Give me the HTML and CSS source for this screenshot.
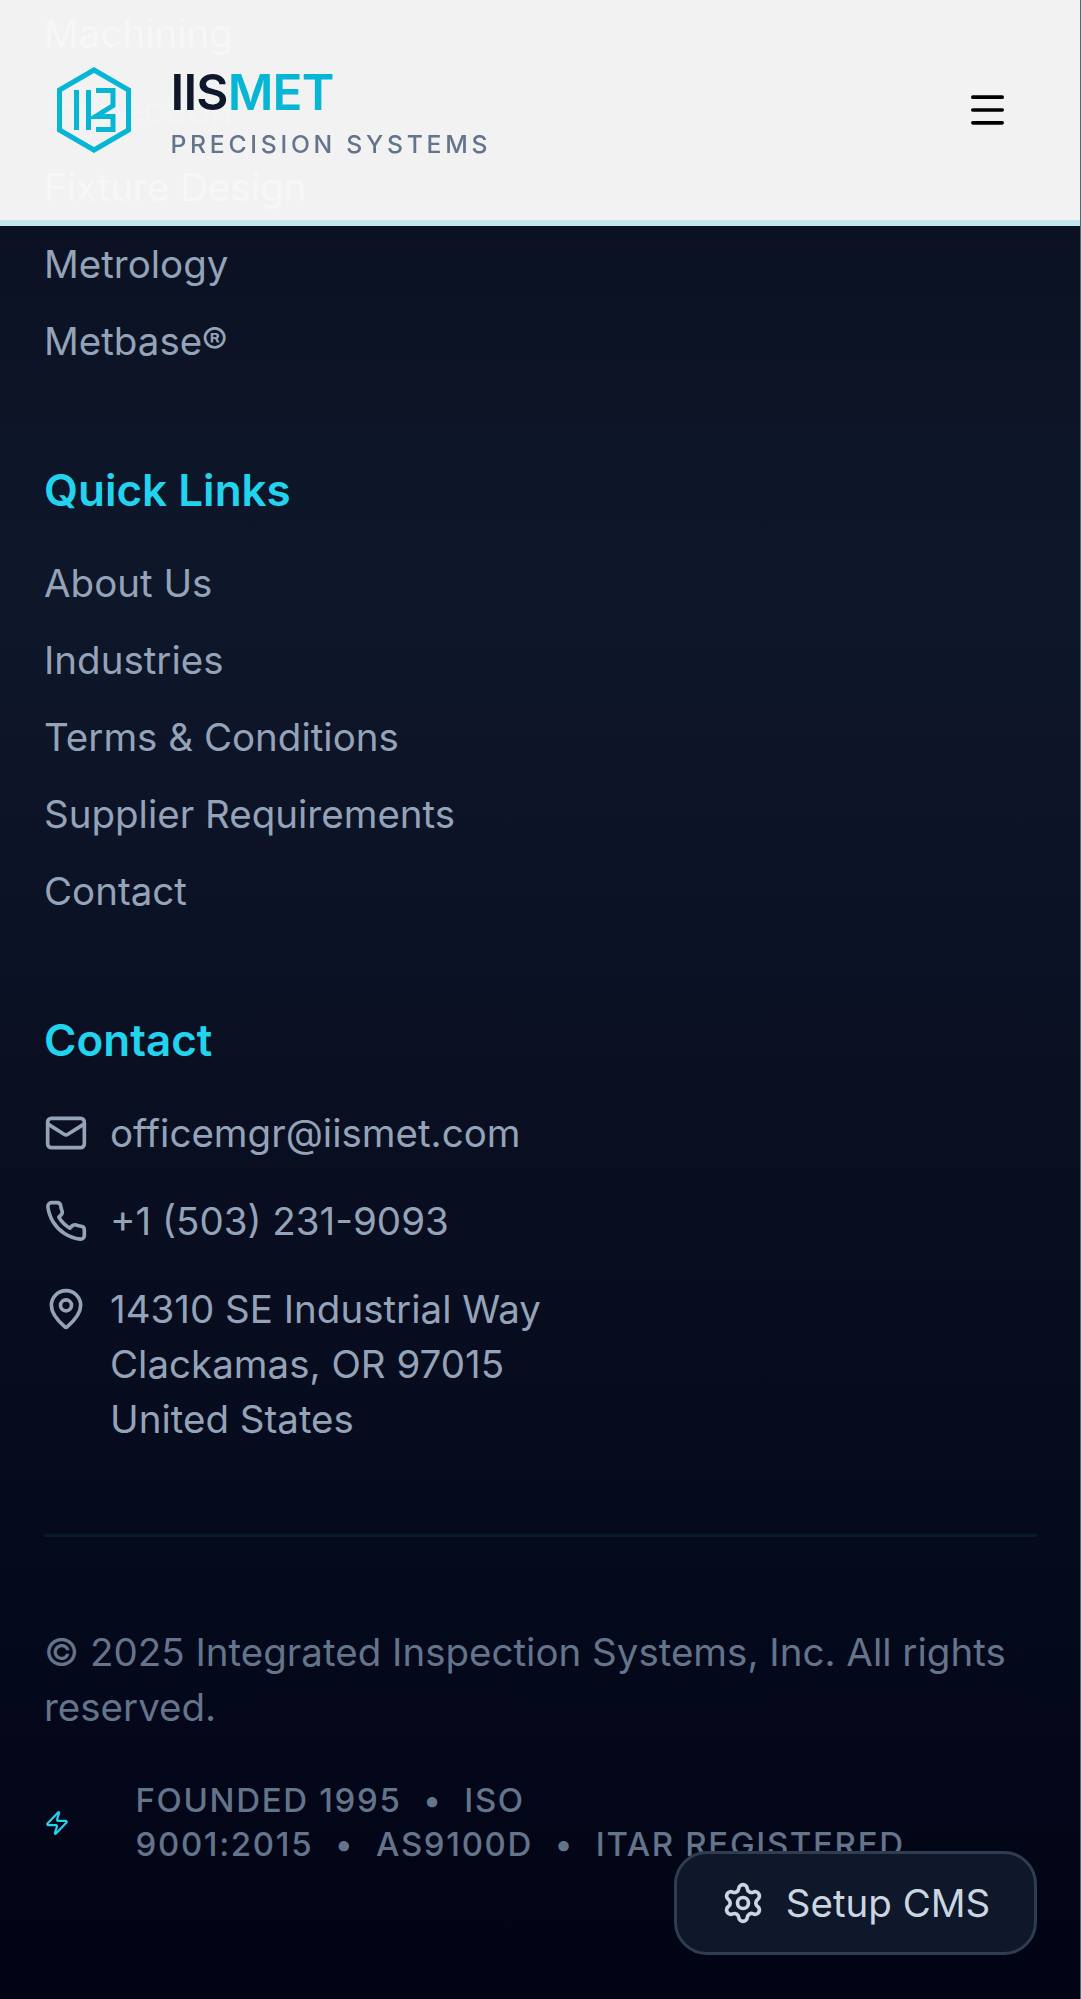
FILE: index.html
```html
<!DOCTYPE html>
<html lang="en">
<head>
<meta charset="utf-8">
<title>IISMET Precision Systems</title>
<link rel="stylesheet" href="styles.css">
</head>
<body>
<header class="header">
  <div class="brand">
    <svg class="brand-mark" viewBox="0 0 76 86" fill="none" stroke="currentColor" stroke-width="5">
      <path d="M38 3 L72.500 23 V63 L38 83 L3.500 63 V23 Z"/>
      <path d="M20.500 23 V63 M32.500 23 V63"/>
      <path d="M40 23.500 H57 V38.500 L39.500 49.500 H57 V62.500 H40"/>
    </svg>
    <div class="brand-text">
      <div class="brand-name">IIS<span class="brand-accent">MET</span></div>
      <div class="brand-tag">PRECISION SYSTEMS</div>
    </div>
  </div>
  <button class="menu-button" aria-label="Menu">
    <svg class="menu-icon" viewBox="0 0 24 24" fill="none" stroke="currentColor" stroke-width="2" stroke-linecap="round"><path d="M4 5h16M4 12h16M4 19h16"/></svg>
  </button>
</header>
<footer class="footer">
  <ul class="links">
    <li class="dim">Machining</li>
    <li class="dimmer">Inspection</li>
    <li class="dim">Fixture Design</li>
    <li>Metrology</li>
    <li>Metbase®</li>
  </ul>
  <section class="group">
    <h3 class="heading">Quick Links</h3>
    <ul class="links">
      <li>About Us</li>
      <li>Industries</li>
      <li>Terms &amp; Conditions</li>
      <li>Supplier Requirements</li>
      <li>Contact</li>
    </ul>
  </section>
  <section class="group">
    <h3 class="heading">Contact</h3>
    <ul class="contacts">
      <li class="contact">
        <svg class="icon" viewBox="0 0 24 24"><rect x="2" y="4" width="20" height="16" rx="2"/><path d="m22 7-8.970 5.700a1.940 1.940 0 0 1-2.060 0L2 7"/></svg>
        <span>officemgr@iismet.com</span>
      </li>
      <li class="contact">
        <svg class="icon" viewBox="0 0 24 24"><path d="M22 16.920v3a2 2 0 0 1-2.180 2 19.790 19.790 0 0 1-8.630-3.070 19.500 19.500 0 0 1-6-6 19.790 19.790 0 0 1-3.070-8.670A2 2 0 0 1 4.110 2h3a2 2 0 0 1 2 1.720 12.840 12.840 0 0 0 .7 2.810 2 2 0 0 1-.45 2.110L8.090 9.910a16 16 0 0 0 6 6l1.270-1.270a2 2 0 0 1 2.110-.45 12.840 12.840 0 0 0 2.810.7A2 2 0 0 1 22 16.920z"/></svg>
        <span>+1 (503) 231-9093</span>
      </li>
      <li class="contact">
        <svg class="icon" viewBox="0 0 24 24"><path d="M20 10c0 4.993-5.539 10.193-7.399 11.799a1 1 0 0 1-1.202 0C9.539 20.193 4 14.993 4 10a8 8 0 0 1 16 0"/><circle cx="12" cy="10" r="3"/></svg>
        <span>14310 SE Industrial Way<br>Clackamas, OR 97015<br>United States</span>
      </li>
    </ul>
  </section>
  <div class="bottom">
    <p class="copyright">© 2025 Integrated Inspection Systems, Inc. All rights reserved.</p>
    <div class="certs">
      <svg class="zap" viewBox="0 0 24 24"><path d="M4 14a1 1 0 0 1-.78-1.630l9.900-10.200a.5.5 0 0 1 .86.460l-1.920 6.020A1 1 0 0 0 13 10h7a1 1 0 0 1 .78 1.630l-9.900 10.200a.5.5 0 0 1-.86-.460l1.920-6.020A1 1 0 0 0 11 14z"/></svg>
      <span>FOUNDED 1995 &nbsp;<span class="dot">•</span>&nbsp; ISO<br>9001:2015 &nbsp;<span class="dot">•</span>&nbsp; AS9100D &nbsp;<span class="dot">•</span>&nbsp; ITAR REGISTERED</span>
    </div>
  </div>
</footer>
<button class="cms">
  <svg class="icon cms-icon" viewBox="0 0 24 24"><path d="M9.671 4.136a2.340 2.340 0 0 1 4.659 0 2.340 2.340 0 0 0 3.319 1.915 2.340 2.340 0 0 1 2.330 4.033 2.340 2.340 0 0 0 0 3.831 2.340 2.340 0 0 1-2.330 4.033 2.340 2.340 0 0 0-3.319 1.915 2.340 2.340 0 0 1-4.659 0 2.340 2.340 0 0 0-3.320-1.915 2.340 2.340 0 0 1-2.330-4.033 2.340 2.340 0 0 0 0-3.831A2.340 2.340 0 0 1 6.350 6.051a2.340 2.340 0 0 0 3.319-1.915"/><circle cx="12" cy="12" r="3"/></svg>
  <span>Setup CMS</span>
</button>
</body>
</html>
```
FILE: styles.css
```css
* { box-sizing: border-box; margin: 0; padding: 0; }
html { background: #5f636e; }
body {
  width: 1080px;
  height: 1999px;
  overflow: hidden;
  font: 38.5px/55px Inter, "Liberation Sans", sans-serif;
  color: #94a3b8;
}
ul { list-style: none; }
button { font: inherit; border: 0; background: none; }

.header {
  position: fixed;
  top: 0;
  left: 0;
  z-index: 2;
  width: 1080px;
  height: 226px;
  padding: 0 65px 0 56px;
  display: flex;
  align-items: center;
  justify-content: space-between;
  background: rgba(255, 255, 255, .95);
  background-clip: padding-box;
  border-bottom: 6px solid #c1e6ec;
}
.brand { display: flex; align-items: center; gap: 38.5px; }
.brand-mark { width: 76px; height: 88px; color: #06b6d4; }
.brand-text { padding-top: 8px; }
.brand-name {
  font-size: 49.5px;
  line-height: 60px;
  font-weight: 600;
  letter-spacing: -.8px;
  color: #0f172a;
}
.brand-accent { color: #06b6d4; }
.brand-tag {
  font-size: 24.75px;
  line-height: 45px;
  font-weight: 500;
  letter-spacing: 3.71px;
  color: #64748b;
}
.menu-button { display: flex; color: #000; }
.menu-icon { width: 55px; height: 44px; }

.footer {
  height: 1999px;
  padding: 5.5px 44px 0;
  background: linear-gradient(#0b1122 0, #0b1123 226px, #0e172a 560px, #0d1327 850px, #0a1022 1060px, #060b1e 1450px, #030719 1750px, #010414 1999px);
}
.links { display: flex; flex-direction: column; gap: 22px; }
.dim { color: #526078; }
.dimmer { color: #1f293d; }
.group { margin-top: 88px; }
.heading {
  margin-bottom: 33px;
  font-size: 44px;
  line-height: 66px;
  font-weight: 600;
  color: #22d3ee;
}
.contacts { display: flex; flex-direction: column; gap: 33px; }
.contact { display: flex; align-items: flex-start; gap: 22px; }
.icon {
  width: 44px;
  height: 44px;
  margin-top: 5.5px;
  flex: none;
  fill: none;
  stroke: currentColor;
  stroke-width: 2;
  stroke-linecap: round;
  stroke-linejoin: round;
}
.bottom {
  width: 993px;
  margin-top: 87px;
  padding-top: 88px;
  border-top: 3px solid #061a2c;
  color: #64748b;
}
.certs {
  margin-top: 43px;
  display: flex;
  align-items: center;
  gap: 65.5px;
  font-size: 33px;
  line-height: 44px;
  font-weight: 500;
  letter-spacing: 1.65px;
}
.dot { margin: 0 .9px; }
.zap {
  width: 26px;
  height: 26px;
  margin-top: 2px;
  flex: none;
  fill: none;
  stroke: #22d3ee;
  stroke-width: 2;
  stroke-linejoin: round;
}
.cms {
  position: fixed;
  left: 674px;
  top: 1851px;
  width: 363px;
  height: 104px;
  display: flex;
  align-items: center;
  justify-content: center;
  gap: 21px;
  border: 3px solid #2f3d51;
  border-radius: 33px;
  background: #0f172a;
  color: #cbd5e1;
}
.cms-icon { margin: 0; }
```
